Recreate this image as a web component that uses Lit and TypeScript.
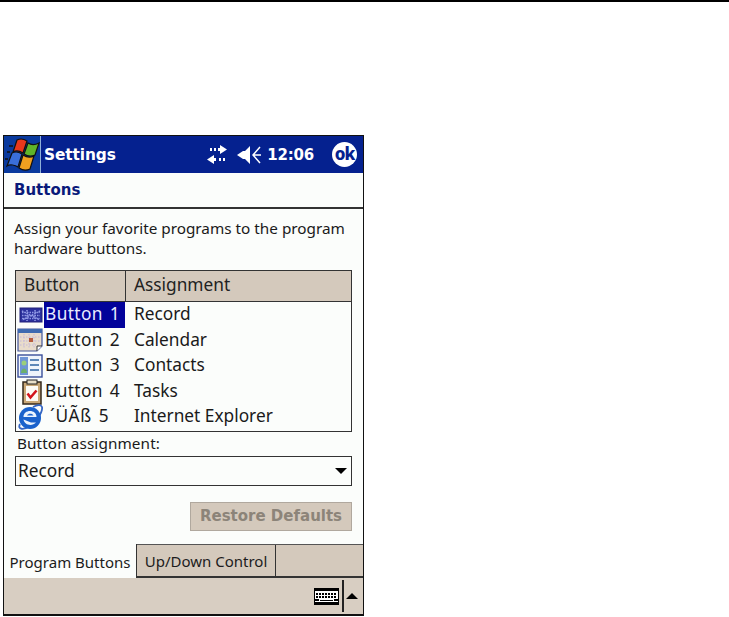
import { LitElement, html, css } from "lit";
import { customElement } from "lit/decorators.js";

const logo = html`<svg width="36" height="36" viewBox="0 0 36 36">
  <path d="M13 3C17 1 20 2 23 4L19 16C16 14 12 13 9 15Z" fill="#e8381c" stroke="#111" stroke-width="1.200"/>
  <path d="M24 6C27 8 31 8 35 6L31 18C27 20 23 19 20 17Z" fill="#5fb52a" stroke="#111" stroke-width="1.200"/>
  <path d="M8 16C12 14 15 15 18 17L14 30C11 28 6 27 3 29Z" fill="#3a6fd8" stroke="#111" stroke-width="1.200"/>
  <path d="M19 18C22 20 26 21 30 19L26 32C22 34 18 33 15 31Z" fill="#f0a020" stroke="#111" stroke-width="1.200"/>
  <path d="M5 9h4M3 15h3M1 22h3" stroke="#111" stroke-width="1.500"/>
</svg>`;

const sync = html`<svg width="21" height="21" viewBox="0 0 21 21" fill="#fff">
  <path d="M13 1l7 4.500-7 4.500V7h-2V4h2zM3 4h2v3H3zM7 4h2v3H7z"/>
  <path d="M7 11l-7 4.500 7 4.500v-3h2v-3H7zM12 14h2v3h-2zM16 14h2v3h-2z"/>
</svg>`;

const speaker = html`<svg width="25" height="22" viewBox="0 0 25 22" fill="none">
  <path d="M0 11l6-4h2l5-5v18l-5-5H6z" fill="#fff"/>
  <path d="M23 3l-7 8 7 8M16 11h8" stroke="#fff" stroke-width="1.500"/>
</svg>`;

const iconRecord = html`<svg width="24" height="22" viewBox="0 0 24 22">
  <rect x="1" y="4" width="22" height="14" fill="#2a2f9c" stroke="#22227a"/>
  <path d="M3 7l18 9M21 7L3 16M3 11.500h18M8 6v11M16 6v11M3 8.500h18M3 14.500h18" stroke="#8f97e4" stroke-width="1.600" stroke-dasharray="1.500 1"/>
</svg>`;
const iconCalendar = html`<svg width="26" height="24" viewBox="0 0 26 24">
  <path d="M1 1h24v17l-5 5H1z" fill="#e9dccb" stroke="#44579a" stroke-width="1.200"/>
  <rect x="1" y="1" width="24" height="4" fill="#3f6bb0"/>
  <path d="M3 9h20M3 13h20M3 17h16M7 6v15M12 6v15M17 6v15" stroke="#c4b8d8" stroke-dasharray="1.500 1.500"/>
  <rect x="12" y="10" width="4" height="4" fill="#b85c3c"/>
  <path d="M20 23v-5h5" fill="#fff" stroke="#333"/>
</svg>`;
const iconContacts = html`<svg width="26" height="24" viewBox="0 0 26 24">
  <rect x="1" y="1" width="24" height="22" fill="#eef4fb" stroke="#3a4f9a" stroke-width="1.400"/>
  <rect x="3" y="3" width="8" height="18" fill="#6f95d6"/>
  <circle cx="7" cy="9" r="2.500" fill="#9ccf7a"/>
  <path d="M4 19c0-6 6-6 6 0z" fill="#6cb06a"/>
  <path d="M13 6h9M13 11h9M13 16h9" stroke="#5c87b8" stroke-width="2"/>
</svg>`;
const iconTasks = html`<svg width="22" height="26" viewBox="0 0 22 26">
  <rect x="2" y="3" width="18" height="22" fill="#c9a877" stroke="#33291c" stroke-width="1.500"/>
  <rect x="5" y="7" width="12" height="15" fill="#fdfbf5"/>
  <rect x="6" y="1" width="10" height="4" fill="#e8dfc8" stroke="#222"/>
  <path d="M6.500 14.500l3 4 6-7" fill="none" stroke="#d3141c" stroke-width="2.600"/>
</svg>`;
const iconIE = html`<svg width="26" height="26" viewBox="0 0 26 26">
  <path d="M3 20C0 26 7 26 13 22C19 18 26 8 25 3C24 0 20 1 16 3" fill="none" stroke="#3566c4" stroke-width="1.800"/>
  <circle cx="13" cy="14" r="11" fill="#1a62cc"/>
  <path d="M6.500 13h13c0-8-13-8-13 0zM6.500 15.500c1 6 9 7 12.500 3h-5" fill="#eaf4ff"/>
  <path d="M10 11.500c1-2.500 5.500-2.500 6.500 0z" fill="#1a62cc"/>
</svg>`;

const keyboard = html`<svg width="25" height="17" viewBox="0 0 25 17">
  <rect x="0.500" y="0.500" width="24" height="16" fill="#fff" stroke="#000"/>
  <rect x="0.500" y="0.500" width="24" height="2.500" fill="#000"/>
  <path d="M2 6h21M2 9h21" stroke="#000" stroke-width="1.800" stroke-dasharray="2 1"/>
  <path d="M1 12h4M20 12h4M1 15h23" stroke="#000" stroke-width="2.200"/>
  <path d="M6 12.500h13" stroke="#000" stroke-width="1"/>
</svg>`;

const rows = [
  { icon: iconRecord, name: "Button 1", assign: "Record", sel: true, ie: false },
  { icon: iconCalendar, name: "Button 2", assign: "Calendar", sel: false, ie: false },
  { icon: iconContacts, name: "Button 3", assign: "Contacts", sel: false, ie: false },
  { icon: iconTasks, name: "Button 4", assign: "Tasks", sel: false, ie: false },
  { icon: iconIE, name: "´ÜÃß 5", assign: "Internet Explorer", sel: false, ie: true },
];

@customElement("app-root")
export class AppRoot extends LitElement {
  static styles = css`
    :host {
      display: block;
      width: 729px;
      height: 617px;
      background: #fff;
      overflow: hidden;
      font-family: "Noto Sans", "Open Sans", sans-serif;
      font-size: 17.300px;
      color: #1a1a1a;
      box-sizing: border-box;
      border-top: 2px solid #000;
    }
    .frame {
      margin: 133px 0 0 3px;
      width: 361px;
      height: 481px;
      box-sizing: border-box;
      border: 1px solid #111;
      border-bottom-width: 2px;
      display: flex;
      flex-direction: column;
      background: #fbfdfb;
    }
    .title {
      height: 37px;
      flex: none;
      background: #05218f;
      display: flex;
      align-items: center;
      color: #fff;
    }
    .start {
      width: 37px;
      height: 37px;
      box-sizing: border-box;
      border-right: 1.500px solid #8fb0d8;
      background: #0a3a9e;
      display: flex;
      align-items: center;
      justify-content: center;
      flex: none;
    }
    .app,
    .clock,
    .head,
    .restore {
      font-family: "DejaVu Sans", sans-serif;
      font-weight: 700;
    }
    .app {
      font-size: 15.400px;
      margin-left: 3px;
      flex: 1;
      letter-spacing: -0.1px;
    }
    .status {
      display: flex;
      align-items: center;
      gap: 9px;
    }
    .clock {
      font-size: 15px;
      margin-left: -4px;
      letter-spacing: -0.2px;
    }
    .ok {
      width: 25px;
      height: 25px;
      border-radius: 50%;
      background: #fff;
      color: #05218f;
      font-weight: 800;
      font-size: 17px;
      line-height: 23px;
      text-align: center;
      letter-spacing: -1px;
      margin: 0 6px 0 18px;
    }
    .head {
      height: 36px;
      flex: none;
      box-sizing: border-box;
      display: flex;
      align-items: center;
      padding-left: 10px;
      font-size: 15px;
      color: #0a1a7a;
      border-bottom: 2px solid #333;
    }
    .body {
      flex: 1;
      min-height: 0;
      display: flex;
      flex-direction: column;
      padding: 9px 11px 0;
    }
    .desc {
      font-size: 15.300px;
      line-height: 20px;
      margin: 0 0 0 -1px;
      white-space: nowrap;
    }
    .table {
      margin-top: 12px;
      height: 162px;
      box-sizing: border-box;
      border: 1.500px solid #333;
      background: #fbfdfb;
      flex: none;
    }
    .thead {
      height: 31px;
      box-sizing: border-box;
      background: #d4c9bc;
      border-bottom: 1.500px solid #333;
      display: grid;
      grid-template-columns: 109px 1fr;
    }
    .th {
      padding-left: 8px;
      line-height: 28px;
      color: #222;
    }
    .th + .th {
      border-left: 1.500px solid #333;
    }
    .row {
      height: 25.500px;
      display: grid;
      grid-template-columns: 109px 1fr;
      align-items: stretch;
    }
    .cell {
      display: flex;
      align-items: stretch;
      min-width: 0;
    }
    .ic {
      width: 28px;
      flex: none;
      display: flex;
      align-items: center;
      justify-content: flex-end;
      padding-right: 1px;
      box-sizing: border-box;
    }
    .name {
      flex: 1;
      padding-left: 1px;
      line-height: 24px;
      white-space: nowrap;
      word-spacing: 2px;
      letter-spacing: 0.4px;
    }
    .name.ie {
      padding-left: 6px;
      letter-spacing: 0.6px;
    }
    .name.sel {
      background: #02029a;
      color: #e8ecff;
    }
    .val {
      padding-left: 9px;
      line-height: 24px;
      white-space: nowrap;
    }
    .label {
      font-size: 15.300px;
      line-height: 20px;
      margin-top: 1px;
      padding-left: 2px;
      letter-spacing: 0.1px;
    }
    .select {
      height: 30px;
      margin-top: 3px;
      flex: none;
      box-sizing: border-box;
      border: 1.500px solid #333;
      display: flex;
      align-items: center;
      justify-content: space-between;
      padding: 0 4px 2px 2px;
    }
    .caret {
      width: 0;
      height: 0;
      margin-top: 2px;
      border-left: 6px solid transparent;
      border-right: 6px solid transparent;
      border-top: 6px solid #000;
    }
    .actions {
      display: flex;
      justify-content: flex-end;
      margin-top: 16px;
    }
    .restore {
      width: 162px;
      height: 29px;
      box-sizing: border-box;
      background: #d4c9bc;
      border: 1.500px solid #b0a89e;
      color: #8c8479;
      font-size: 15px;
      text-align: center;
      line-height: 26px;
      white-space: nowrap;
    }
    .tabs {
      height: 34px;
      flex: none;
      display: flex;
      background: #d4c9bc;
      border-top: 1px solid #555;
      box-sizing: border-box;
      border-bottom: 2px solid #333;
      font-size: 15px;
    }
    .tab {
      line-height: 33px;
      white-space: nowrap;
      text-align: center;
      box-sizing: border-box;
      color: #1c1c1c;
    }
    .tab.on {
      width: 133px;
      background: #fbfdfb;
      margin: -1px 0 -2px;
      line-height: 37px;
      border-right: 1.500px solid #333;
    }
    .tab.off {
      width: 139px;
      border-right: 1.500px solid #333;
    }
    .foot {
      height: 36px;
      flex: none;
      background: #d8cec2;
      display: flex;
      align-items: center;
      justify-content: flex-end;
    }
    .sep {
      width: 1.500px;
      height: 32px;
      background: #222;
      margin: 0 2.500px 0 3px;
    }
    .up {
      width: 0;
      height: 0;
      border-left: 6px solid transparent;
      border-right: 6px solid transparent;
      border-bottom: 6px solid #000;
      margin-right: 5px;
    }
  `;

  render() {
    return html`<div class="frame">
      <div class="title">
        <div class="start">${logo}</div>
        <div class="app">Settings</div>
        <div class="status">
          ${sync}${speaker}
          <span class="clock">12:06</span>
        </div>
        <div class="ok">ok</div>
      </div>
      <div class="head">Buttons</div>
      <div class="body">
        <p class="desc">Assign your favorite programs to the program<br />hardware buttons.</p>
        <div class="table">
          <div class="thead">
            <div class="th">Button</div>
            <div class="th">Assignment</div>
          </div>
          ${rows.map(
            (r) => html`<div class="row">
              <div class="cell">
                <span class="ic">${r.icon}</span>
                <span class="name ${r.sel ? "sel" : ""} ${r.ie ? "ie" : ""}">${r.name}</span>
              </div>
              <div class="val">${r.assign}</div>
            </div>`
          )}
        </div>
        <div class="label">Button assignment:</div>
        <div class="select"><span>Record</span><span class="caret"></span></div>
        <div class="actions"><div class="restore">Restore Defaults</div></div>
      </div>
      <div class="tabs">
        <div class="tab on">Program Buttons</div>
        <div class="tab off">Up/Down Control</div>
      </div>
      <div class="foot">
        ${keyboard}
        <span class="sep"></span>
        <span class="up"></span>
      </div>
    </div>`;
  }
}
